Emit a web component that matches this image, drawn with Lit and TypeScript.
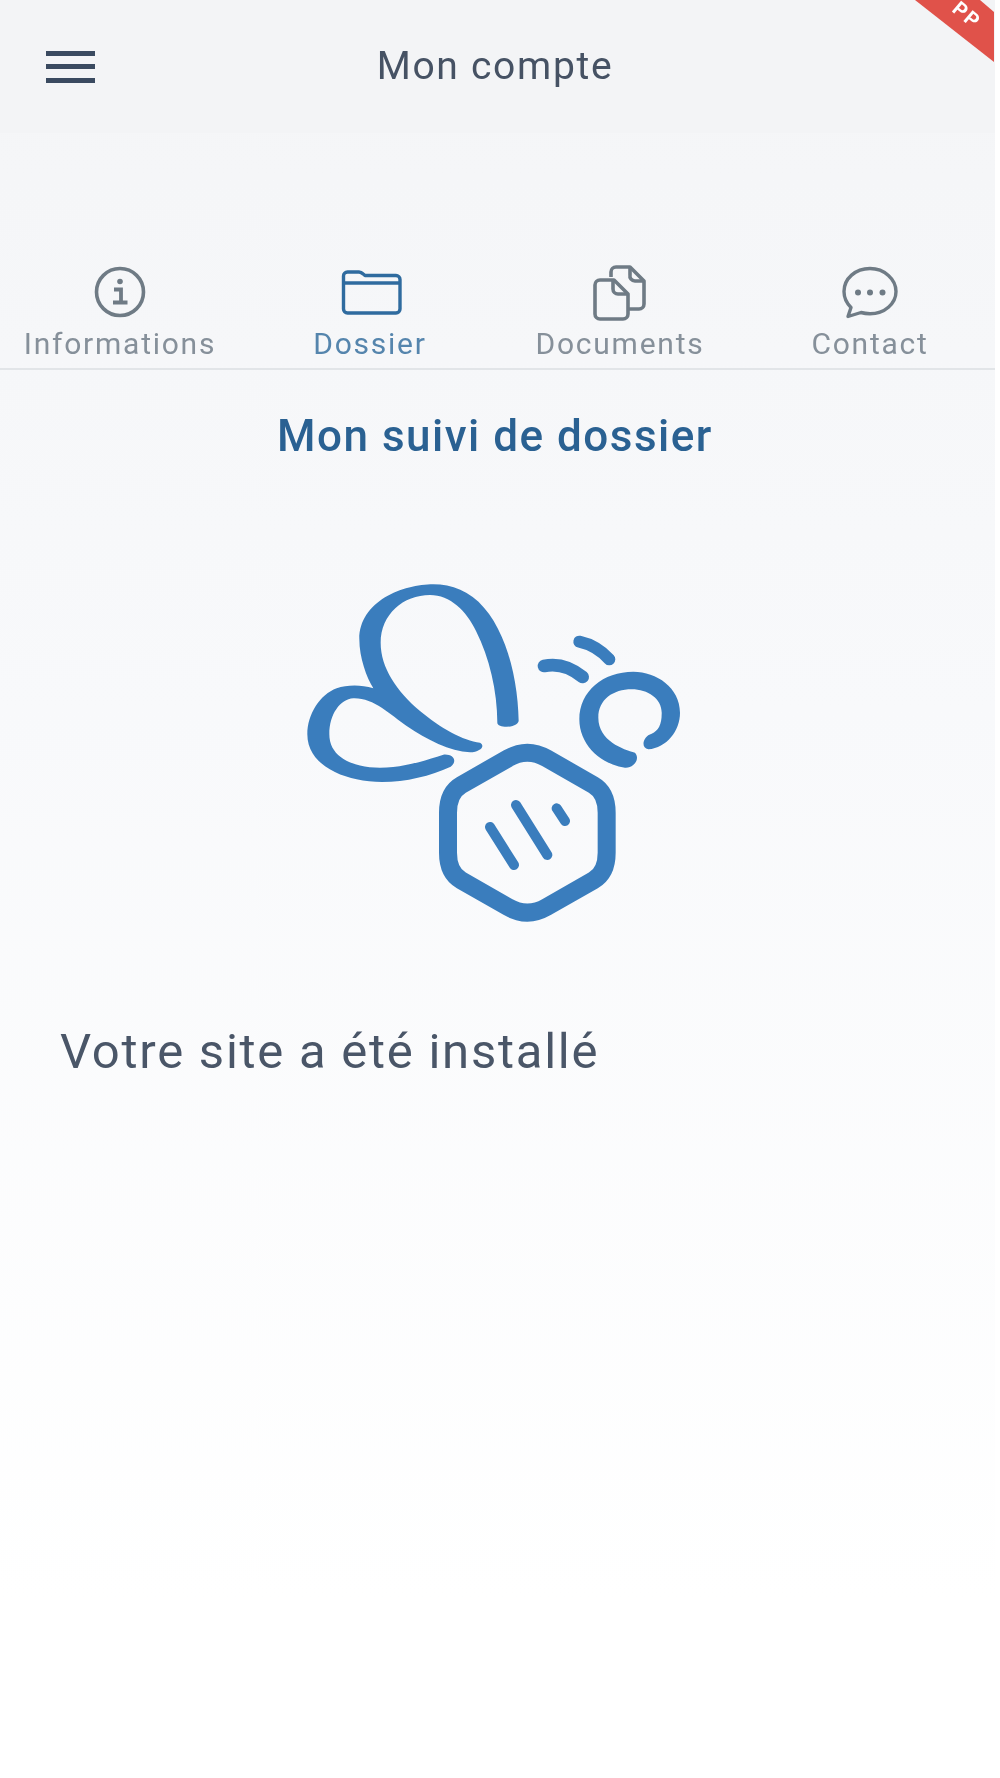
import { LitElement, html, css } from "lit";
import { customElement } from "lit/decorators.js";

@customElement("app-root")
export class AppRoot extends LitElement {
  static styles = css`
    :host { display: block; width: 1000px; height: 1778px; background: #fff; overflow: hidden; }
    .page {
      position: relative; width: 995px; height: 1778px; overflow: hidden;
      display: flex; flex-direction: column;
      font-family: Roboto, "Liberation Sans", sans-serif;
      background: linear-gradient(180deg, #f4f5f7 0%, #f8f9fb 40%, #ffffff 90%);
      filter: blur(0.7px);
    }
    .header {
      height: 133px; flex: none; background: #f3f4f6;
      display: grid; grid-template-columns: 1fr auto 1fr; align-items: center;
      padding: 0 5px 0 0; box-sizing: border-box;
    }
    .burger { width: 49px; height: 32px; margin-left: 46px; display: flex; flex-direction: column; justify-content: space-between; }
    .burger span { height: 5px; background: #3a4a60; display: block; }
    .title { font-size: 39px; color: #465264; letter-spacing: 1.7px; line-height: 1; }
    .ribbon { position: absolute; top: 0; right: 0; width: 90px; height: 64px; }
    .ribbon text { font-family: Roboto, sans-serif; font-size: 20px; font-weight: 700; fill: #fff; letter-spacing: 2px; }
    .tabs {
      flex: none; margin-top: 130px; margin-left: -5px;
      display: grid; grid-template-columns: repeat(4, 250px);
      height: 105px;
    }
    .tab { display: flex; flex-direction: column; align-items: center; color: #86909a; }
    .tab.active { color: #5585ad; }
    .tab svg { width: 64px; height: 62px; flex: none; display: block; }
    .tab span { font-size: 30px; line-height: 32px; letter-spacing: 1.75px; margin-top: 3px; }
    .rule { height: 2px; background: #e2e5e8; flex: none; }
    h1 {
      margin: 41px 0 0; padding-right: 5px; text-align: center; font-size: 44px; line-height: 50px; font-weight: 500;
      letter-spacing: 1.5px; color: #2a6192;
    }
    .bee { width: 420px; height: 360px; margin: 110px 0 0 290px; flex: none; display: block; }
    p { margin: 94px 0 0 60px; font-size: 49px; line-height: 54px; color: #4a5668; letter-spacing: 1.75px; }
  `;

  render() {
    return html`<div class="page">
      <div class="header">
        <div class="burger"><span></span><span></span><span></span></div>
        <div class="title">Mon compte</div>
      </div>
      <svg class="ribbon" viewBox="0 0 90 64">
        <polygon points="10,0 75,0 89,12 89,62" fill="#e0524a"></polygon>
        <text x="62" y="15" text-anchor="middle" dominant-baseline="central" transform="rotate(40 62 15)">PP</text>
      </svg>
      <div class="tabs">
        <div class="tab">
          <svg viewBox="0 0 64 62" fill="none" stroke="#6f7b85" stroke-width="3.6">
            <circle cx="32" cy="29" r="23.5"></circle>
            <circle cx="32" cy="18.500" r="2.800" fill="#6f7b85" stroke="none"></circle>
            <path d="M26 26.500H33V39M25 39.500H39.500" stroke-width="3.800"></path>
          </svg>
          <span>Informations</span>
        </div>
        <div class="tab active">
          <svg viewBox="0 0 64 62" fill="none" stroke="#2f6b9f" stroke-width="3.4" stroke-linejoin="round">
            <path d="M5.500 18V13a4 4 0 0 1 4-4H21c2 0 3 .8 4.200 2l1.800 1.500H58a4 4 0 0 1 4 4V46a4 4 0 0 1-4 4H9.500a4 4 0 0 1-4-4Z"></path>
            <path d="M5.500 20H62"></path>
          </svg>
          <span>Dossier</span>
        </div>
        <div class="tab">
          <svg viewBox="0 0 64 62" fill="none" stroke="#6f7b85" stroke-width="3.600" stroke-linejoin="round">
            <path d="M23 14V9a5 5 0 0 1 5-5H42L56 18V41a5 5 0 0 1-5 5H40"></path>
            <path d="M42 4V12a5 5 0 0 0 5 6H56"></path>
            <path d="M7 22a5 5 0 0 1 5-5H26L40 31V51a5 5 0 0 1-5 5H12a5 5 0 0 1-5-5Z"></path>
            <path d="M25 17V26a5 5 0 0 0 5 5H40"></path>
          </svg>
          <span>Documents</span>
        </div>
        <div class="tab">
          <svg viewBox="0 0 64 62" fill="none" stroke="#6f7b85" stroke-width="3.400" stroke-linejoin="round">
            <path d="M32 5.500C17.500 5.500 6 15.500 6 28.500c0 6 2.500 11.500 7 16L10 53.500l13-4c2.800.8 5.800 1.200 9 1.200 14.500 0 26-10 26-22.200S46.500 5.500 32 5.500Z"></path>
            <g fill="#6f7b85" stroke="none"><circle cx="20" cy="29.500" r="3"></circle><circle cx="32" cy="29.500" r="3"></circle><circle cx="44.500" cy="29.500" r="3"></circle></g>
          </svg>
          <span>Contact</span>
        </div>
      </div>
      <div class="rule"></div>
      <h1>Mon suivi de dossier</h1>
      <svg class="bee" viewBox="0 0 1260 1080">
        <g fill="#3a7dbd">
          <path d="M686 450C684 330 652 190 582 110C540 60 485 40 430 40C340 40 208 90 208 205C208 260 230 320 250 352C210 340 170 342 140 352C90 370 52 430 52 490C52 570 130 610 200 625C290 645 400 625 482 587C504 570 490 548 460 551C400 570 340 590 270 590C190 590 118 560 118 490C118 430 150 385 190 382C250 380 300 430 350 465C410 505 480 542 540 544C572 542 587 525 570 515C520 510 450 470 390 420C320 360 272 290 272 215C272 130 340 72 420 72C480 72 530 120 558 180C598 260 622 360 622 455C622 472 682 472 686 450Z"></path>
          <path d="M1075 535C1130 530 1170 480 1170 425C1170 350 1100 302 1030 302C940 302 868 360 868 445C868 520 930 580 1005 590C1030 592 1052 565 1035 545C1000 535 925 510 925 440C925 385 970 355 1025 355C1075 355 1118 385 1115 430C1115 460 1105 480 1085 488C1060 495 1050 530 1075 535Z"></path>
        </g>
        <g fill="none" stroke="#3a7dbd" stroke-linecap="round" stroke-linejoin="round">
          <path d="M762 285C810 275 850 295 878 318" stroke-width="38"></path>
          <path d="M868 212C905 220 935 240 958 265" stroke-width="36"></path>
          <path d="M654 562C692 540 732 540 770 562L910 642C938 658 950 690 950 725L950 845C950 880 938 912 910 928L770 1008C732 1030 692 1030 654 1008L514 928C486 912 474 880 474 845L474 725C474 690 486 658 514 642Z" stroke-width="54"></path>
          <path d="M600 768L672 882M678 702L772 852M800 712L825 750" stroke-width="30"></path>
        </g>
      </svg>
      <p>Votre site a été installé</p>
    </div>`;
  }
}
